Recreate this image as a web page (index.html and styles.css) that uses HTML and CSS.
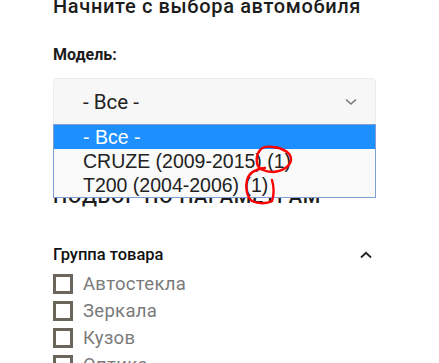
FILE: index.html
```html
<!DOCTYPE html>
<html lang="ru">

<head>
    <meta charset="UTF-8">
    <meta name="viewport" content="width=device-width, initial-scale=1.0">
    <title>Подбор автостекол</title>
    <link rel="stylesheet" href="styles.css">
</head>

<body>
    <div class="filter">
        <h2 class="title">Начните с выбора автомобиля</h2>

        <div class="field">
            <div class="label">Модель:</div>
            <div class="select-wrap">
                <div class="select">
                    <span>- Все -</span>
                    <svg class="chevron" width="12" height="8" viewBox="0 0 12 8">
                        <path d="M1 1.5 L6 6 L11 1.5" fill="none" stroke="#777" stroke-width="1.6" />
                    </svg>
                </div>
                <ul class="options">
                    <li class="selected">- Все -</li>
                    <li>CRUZE (2009-2015) (1)</li>
                    <li>T200 (2004-2006) (1)</li>
                </ul>
                <!-- red hand marks from the screenshot -->
                <svg class="marks" width="323" height="90" viewBox="0 0 323 90">
                    <path d="M206 27 C208 22 214 21 220 22 C230 23 238 28 238 34 C238 41 230 46 220 47 C212 47 205 44 204 38 C203 33 204 29 207 25"
                        fill="none" stroke="#f00" stroke-width="2.4" stroke-linecap="round" />
                    <path d="M212 43 C203 44 196 48 194 55 C192 63 194 72 199 76 C205 79 214 79 219 76 C221 70 221 62 219 55"
                        fill="none" stroke="#f00" stroke-width="2.4" stroke-linecap="round" />
                </svg>
            </div>
        </div>

        <h2 class="title title-upper">Подбор по параметрам</h2>

        <div class="group">
            <div class="group-head">
                <span>Группа товара</span>
                <svg width="12" height="8" viewBox="0 0 12 8">
                    <path d="M1 6.5 L6 1.8 L11 6.5" fill="none" stroke="#222" stroke-width="1.8" />
                </svg>
            </div>
            <ul class="checks">
                <li><span class="box"></span>Автостекла</li>
                <li><span class="box"></span>Зеркала</li>
                <li><span class="box"></span>Кузов</li>
                <li><span class="box"></span>Оптика</li>
            </ul>
        </div>
    </div>
</body>

</html>
```

FILE: styles.css
```css
body {
    margin: 0;
    background-color: #fff;
    color: #222;
    font-family: Roboto, 'Noto Sans', sans-serif;
    overflow: hidden;
}

.filter {
    padding: 0 63px 0 53px;
    margin-top: -6px;
}

.title {
    font-size: 20px;
    font-weight: 500;
    line-height: 24px;
    margin: 0;
    letter-spacing: 0.65px;
    color: #1c1c1c;
}

.title-upper {
    text-transform: uppercase;
    margin-top: 59px;
}

.field {
    margin-top: 27px;
}

.label {
    font-size: 16px;
    font-weight: 700;
    line-height: 20px;
    color: #1c1c1c;
}

.select-wrap {
    position: relative;
    margin-top: 13px;
}

.select {
    height: 45px;
    display: flex;
    align-items: center;
    justify-content: space-between;
    padding: 0 18px 0 29px;
    background-color: #f7f7f7;
    border: 1px solid #ececec;
    border-radius: 4px;
    font-size: 20.5px;
    color: #222;
}

.options {
    position: absolute;
    top: 46px;
    left: 0;
    right: 0;
    margin: 0;
    padding: 0;
    list-style: none;
    background-color: #fafafa;
    border: 1px solid #7f9fd4;
    font-family: 'Liberation Sans', Arial, sans-serif;
    font-size: 19.5px;
    z-index: 5;
}

.options li {
    height: 24px;
    line-height: 24px;
    padding-left: 29px;
    color: #222;
}

.options li.selected {
    background-color: #1e8fff;
    color: #fff;
}

.marks {
    position: absolute;
    top: 47px;
    left: 0;
    z-index: 6;
}

.group {
    margin-top: 37px;
}

.group-head {
    display: flex;
    justify-content: space-between;
    align-items: center;
    padding-right: 4px;
    font-size: 16.5px;
    font-weight: 500;
    line-height: 20px;
    color: #111;
}

.checks {
    list-style: none;
    margin: 5px 0 0;
    padding: 0;
}

.checks li {
    display: flex;
    align-items: center;
    height: 27px;
    font-size: 18.5px;
    letter-spacing: 0.3px;
    color: #7a7a7a;
}

.box {
    width: 14px;
    height: 14px;
    border: 3px solid #6b665c;
    margin-right: 10px;
}
```
